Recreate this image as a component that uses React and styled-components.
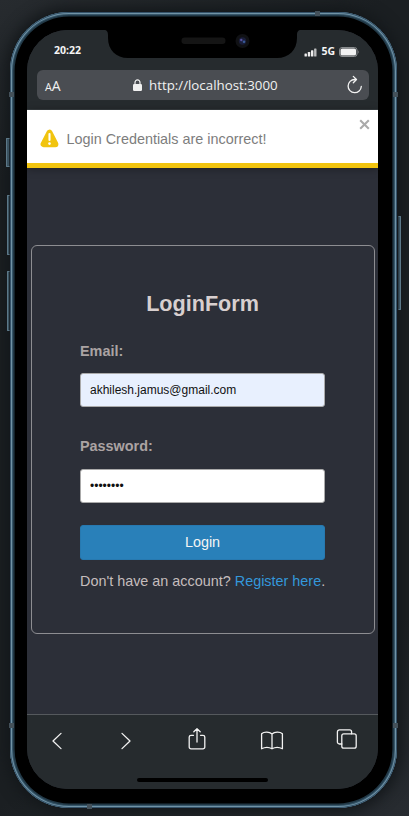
import React from "react";
import styled, { createGlobalStyle } from "styled-components";

const GlobalStyle = createGlobalStyle`
  * { box-sizing: border-box; }
  body { margin: 0; background: #1d2124; font-family: "Liberation Sans", Arial, sans-serif; }
`;

const Stage = styled.main`
  width: 409px;
  height: 816px;
  padding: 12px 12px 8px 10px;
  overflow: hidden;
  background: linear-gradient(155deg, #272b2f 0%, #1b1f22 18%, #1b1f22 80%, #282c31 100%);
`;

const Device = styled.div`
  position: relative;
  width: 387px;
  height: 796px;
  padding: 18px 19px 19px 17px;
  border-radius: 59px;
  background: #000;
  box-shadow: inset 0 0 0 1px #35536a, inset 0 0 0 2px #7193a5, inset 0 0 0 3px #36566a,
    inset 0 0 0 4.6px #213846, 0 0 14px 5px #14181b;
`;

const SideKey = styled.i`
  position: absolute;
  top: ${(p) => p.$top}px;
  height: ${(p) => p.$height}px;
  width: ${(p) => p.$width}px;
  ${(p) => (p.$right ? "left: 388px;" : "right: 387px;")}
  border: 1px solid #5c7888;
  ${(p) => (p.$right ? "border-left-color: #2c3e49;" : "border-right-color: #1c2830;")}
  border-radius: 1px;
  background: #3b5361;
`;

const Antenna = styled.i`
  position: absolute;
  left: ${(p) => p.$x}px;
  top: ${(p) => p.$y}px;
  width: 5px;
  height: 5px;
  background: #44515a;
`;

const Screen = styled.div`
  position: relative;
  display: flex;
  flex-direction: column;
  width: 351px;
  height: 759px;
  overflow: hidden;
  border-radius: 41px;
  background: #2c2f38;
`;

const BrowserTop = styled.header`
  flex: none;
  height: 80px;
  padding: 0 9px 0 10px;
  background: #262b2e;
  border-bottom: 1px solid #373d40;
`;

const StatusBar = styled.div`
  display: flex;
  justify-content: space-between;
  align-items: center;
  height: 40px;
  padding: 0 10px 0 17px;
  color: #f5f5f5;
  font: bold 10.5px "Open Sans", sans-serif;
`;

const Signals = styled.div`
  display: flex;
  align-items: center;
  gap: 4px;
  padding-top: 2px;
  svg { display: block; position: relative; top: 1px; }
`;

const Notch = styled.svg`
  position: absolute;
  left: 77px;
  top: 0;
`;

const AddressBar = styled.div`
  display: flex;
  align-items: center;
  height: 30px;
  padding: 0 6px 0 8px;
  border-radius: 6px;
  background: #4a4d52;
  color: #f1f1f1;
  font: 13.3px "Open Sans", sans-serif;
`;

const TextSize = styled.span`
  width: 88px;
  font-size: 14px;
  small { font-size: 10.8px; }
`;

const Address = styled.span`
  display: flex;
  align-items: center;
  gap: 7px;
  flex: 1;
  white-space: nowrap;
`;

const Toast = styled.div`
  display: flex;
  align-items: center;
  flex: none;
  position: relative;
  height: 58px;
  padding: 4px 12px 0 12.5px;
  gap: 8px;
  background: #fff;
  border-bottom: 5px solid #f1c40f;
  box-shadow: 0 1px 8px rgba(0, 0, 0, 0.35);
  color: #7d7d7d;
  font-size: 14.4px;
`;

const CloseButton = styled.button`
  position: absolute;
  right: 8px;
  top: 9px;
  padding: 0;
  border: 0;
  background: none;
  line-height: 0;
`;

const Page = styled.section`
  flex: 1;
  padding: 76.5px 3px 0 3.5px;
`;

const Card = styled.form`
  display: flex;
  flex-direction: column;
  height: 389.5px;
  padding: 45.5px 49px 0 48.5px;
  border: 1px solid #8d8d91;
  border-radius: 6px;
`;

const Title = styled.h1`
  margin: 0 0 27px;
  color: #d8cfcf;
  font-size: 21.6px;
  line-height: 25px;
  text-align: center;
`;

const Label = styled.label`
  margin-bottom: ${(p) => p.$gap}px;
  color: #aba3a3;
  font-size: 14.4px;
  font-weight: bold;
  line-height: 17px;
`;

const Input = styled.input`
  height: 34px;
  margin: 0 0 ${(p) => p.$gap}px;
  padding: 0 9px;
  border: 1px solid #aaa;
  border-radius: 3px;
  outline: 0;
  background: ${(p) => (p.$filled ? "#e8f0fe" : "#fff")};
  color: #111;
  font: 12px "Liberation Sans", Arial, sans-serif;
`;

const LoginButton = styled.button`
  height: 35px;
  margin: 0 0 13px;
  padding: 0 0 2px;
  border: 1px solid #2779b0;
  border-radius: 3px;
  background: #2980b9;
  color: #f4f4f4;
  font: 14.4px "Liberation Sans", Arial, sans-serif;
`;

const Note = styled.p`
  margin: 0;
  color: #c5bdbd;
  font-size: 14.4px;
  line-height: 17px;
  white-space: nowrap;
`;

const RegisterLink = styled.a`
  color: #3498db;
  text-decoration: none;
`;

const Toolbar = styled.nav`
  display: grid;
  grid-template-columns: 69px 71px 75px 75px 24px;
  flex: none;
  height: 75px;
  padding: 12px 0 0 18px;
  border-top: 1px solid #55595d;
  background: #262b2e;
`;

const ToolIcon = styled.svg`
  width: 24px;
  height: 26px;
  fill: none;
  stroke: #f2f2f2;
  stroke-width: 1.3;
  stroke-linecap: round;
  stroke-linejoin: round;
`;

const HomeIndicator = styled.i`
  position: absolute;
  left: 110px;
  bottom: 7px;
  width: 131px;
  height: 4px;
  border-radius: 2px;
  background: #000;
`;

export default function App() {
  return (
    <Stage>
      <GlobalStyle />
      <Device>
        <SideKey $top={126} $height={29} $width={4} />
        <SideKey $top={183} $height={60} $width={3} />
        <SideKey $top={259} $height={60} $width={3} />
        <SideKey $right $top={204} $height={94} $width={3} />
        <Antenna $x={305} $y={-1} />
        <Antenna $x={-1} $y={80} />
        <Antenna $x={383} $y={80} />
        <Antenna $x={-1} $y={711} />
        <Antenna $x={383} $y={711} />
        <Antenna $x={77} $y={792} />
        <Screen>
          <BrowserTop>
            <StatusBar>
              <span>20:22</span>
              <Signals>
                <svg width="13" height="9" fill="#eee">
                  <rect x="0.5" y="5.5" width="2.4" height="3" rx=".6" />
                  <rect x="3.8" y="4" width="2.4" height="4.5" rx=".6" />
                  <rect x="7" y="2.2" width="2.4" height="6.3" rx=".6" />
                  <rect x="10.1" y=".5" width="2.4" height="8" rx=".6" opacity=".75" />
                </svg>
                <span>5G</span>
                <svg width="20" height="10">
                  <rect x=".5" y=".5" width="17.5" height="9" rx="2.5" fill="none" stroke="#898c8e" />
                  <rect x="1.5" y="1.5" width="15.5" height="7" rx="1.6" fill="#f2f2f2" />
                  <path d="M19 3.5c.8.5.8 2.5 0 3z" fill="#898c8e" />
                </svg>
              </Signals>
            </StatusBar>
            <AddressBar>
              <TextSize><small>A</small>A</TextSize>
              <Address>
                <svg width="9" height="12" viewBox="0 0 9 12">
                  <rect y="5" width="9" height="7" rx="1.2" fill="#f0f0f0" />
                  <path d="M2 6V3.4a2.5 2.5 0 0 1 5 0V6" fill="none" stroke="#f0f0f0" strokeWidth="1.2" />
                </svg>
                http://localhost:3000
              </Address>
              <svg width="17" height="20" viewBox="0 0 17 20" fill="none" stroke="#f2f2f2" strokeWidth="1.3" strokeLinecap="round" strokeLinejoin="round">
                <path d="M9.5 4.5H8.7A6.6 6.6 0 1 0 15.3 11.5M7.3 1.4l3.2 3.1-3.2 3.2" />
              </svg>
            </AddressBar>
          </BrowserTop>
          <Toast role="alert">
            <svg width="19" height="19" viewBox="0 0 19 19">
              <path d="M9.5 3.6 3.6 15.2h11.8z" fill="#f1c40f" stroke="#f1c40f" strokeWidth="6" strokeLinejoin="round" />
              <path d="M9.5 5v6" stroke="#fff" strokeWidth="2.1" strokeLinecap="round" />
              <circle cx="9.5" cy="14.6" r="1.3" fill="#fff" />
            </svg>
            <span>Login Credentials are incorrect!</span>
            <CloseButton type="button" aria-label="Close">
              <svg width="11" height="11" stroke="#aaa" strokeWidth="2.1">
                <path d="m1.2 1.2 8.6 8.6M9.8 1.2 1.2 9.8" />
              </svg>
            </CloseButton>
          </Toast>
          <Page>
            <Card>
              <Title>LoginForm</Title>
              <Label htmlFor="email" $gap={13}>Email:</Label>
              <Input id="email" $filled $gap={31} defaultValue="akhilesh.jamus@gmail.com" />
              <Label htmlFor="password" $gap={14}>Password:</Label>
              <Input id="password" type="password" $gap={22} defaultValue="password" />
              <LoginButton type="button">Login</LoginButton>
              <Note>Don't have an account? <RegisterLink href="#">Register here</RegisterLink>.</Note>
            </Card>
          </Page>
          <Toolbar>
            <ToolIcon><path d="m16 6.4-8 7.6 8 7.6" /></ToolIcon>
            <ToolIcon><path d="m8 6.4 8 7.6-8 7.6" /></ToolIcon>
            <ToolIcon>
              <path d="M8.5 8.3H6A1.8 1.8 0 0 0 4.2 10v10A1.8 1.8 0 0 0 6 21.8h12a1.8 1.8 0 0 0 1.8-1.8V10A1.8 1.8 0 0 0 18 8.3h-2.5M12 15V2M8.8 4.8 12 1.7l3.2 3.1" />
            </ToolIcon>
            <ToolIcon>
              <path d="M12 7C9.5 4.6 4 4.5 1.6 6.8v15c3-1.6 7.6-1.6 10.4 0 2.8-1.6 7.4-1.6 10.4 0v-15C20 4.5 14.5 4.6 12 7v14.8" />
            </ToolIcon>
            <ToolIcon>
              <rect x="6.8" y="6.8" width="14.4" height="14.4" rx="2" />
              <path d="M6.8 17H4.4a2 2 0 0 1-2-2V4.9a2 2 0 0 1 2-2h10.2a2 2 0 0 1 2 2v1.9" />
            </ToolIcon>
          </Toolbar>
          <HomeIndicator />
          <Notch width="197" height="28" viewBox="0 0 197 28">
            <path d="M0 0c3 0 4 2 4 5v3c0 12 8 20 20 20h149c12 0 20-8 20-20V5c0-3 1-5 4-5z" fill="#000" />
            <rect x="77.5" y="7.5" width="44" height="6.5" rx="3.2" fill="#151515" />
            <circle cx="138.5" cy="11" r="7" fill="#101114" />
            <circle cx="138.5" cy="11" r="3.7" fill="#1a1e39" />
            <circle cx="137.3" cy="10" r="1.2" fill="#5752a0" />
            <circle cx="140" cy="11.8" r="1.3" fill="#385b98" />
          </Notch>
        </Screen>
      </Device>
    </Stage>
  );
}
